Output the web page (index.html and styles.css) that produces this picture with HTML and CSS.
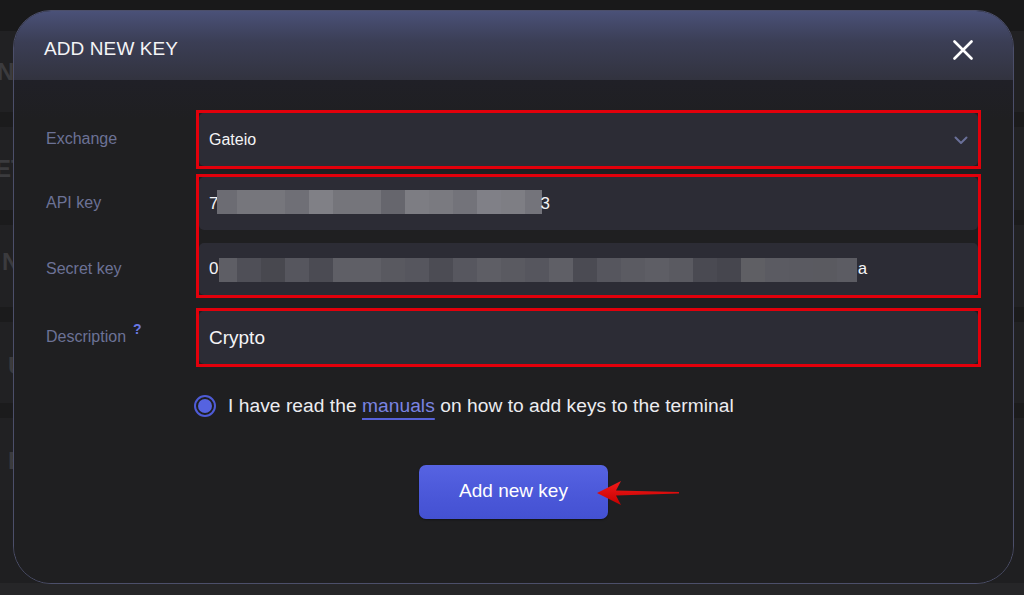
FILE: index.html
```html
<!DOCTYPE html>
<html lang="en">
<head>
<meta charset="utf-8">
<title>Add new key</title>
<link rel="stylesheet" href="styles.css">
</head>
<body>
<div class="backdrop">
  <div class="bd-top"></div>
  <div class="bd-row r1"><span class="bd-text t1">NC</span></div>
  <div class="bd-sep"></div>
  <div class="bd-row r2"><span class="bd-text t2">ET</span></div>
  <div class="bd-sep"></div>
  <div class="bd-row r3"><span class="bd-text t3">N</span></div>
  <div class="bd-sep"></div>
  <div class="bd-row r4"><span class="bd-text t4">U</span></div>
  <div class="bd-sep"></div>
  <div class="bd-row r5"><span class="bd-text t5">E</span></div>
  <div class="bd-row r6"></div>
  <div class="bd-bottom"></div>
</div>

<div class="modal">
  <div class="modal-header">
    <h1 class="modal-title">ADD NEW KEY</h1>
    <button class="close-btn" aria-label="Close">
      <svg width="20" height="20" viewBox="0 0 20 20"><path d="M1.5 1.5 L18.5 18.5 M18.5 1.5 L1.5 18.5" stroke="#ffffff" stroke-width="2.6" stroke-linecap="round" fill="none"/></svg>
    </button>
  </div>

  <div class="modal-body">
    <div class="group g1">
      <div class="labels"><div class="label h53">Exchange</div></div>
      <div class="mark">
        <div class="field h53 select">
          <span class="val-sm">Gateio</span>
          <svg class="chev" width="14" height="9" viewBox="0 0 14 9"><path d="M1.5 1.5 L7 7 L12.5 1.5" stroke="#6a7099" stroke-width="2" fill="none" stroke-linecap="round" stroke-linejoin="round"/></svg>
        </div>
      </div>
    </div>

    <div class="group g2">
      <div class="labels stack">
        <div class="label h53">API key</div>
        <div class="label h52">Secret key</div>
      </div>
      <div class="mark stack">
        <div class="field h53">
          <span class="val-md">7</span><span class="blur blur-api"></span><span class="val-md tail3">3</span>
        </div>
        <div class="field h52">
          <span class="val-md">0</span><span class="blur blur-secret"></span><span class="val-mono">a</span>
        </div>
      </div>
    </div>

    <div class="group g3">
      <div class="labels"><div class="label h53">Description<span class="qmark">?</span></div></div>
      <div class="mark">
        <div class="field h53"><span class="val-lg">Crypto</span></div>
      </div>
    </div>

    <div class="agree">
      <span class="radio"><span class="radio-dot"></span></span>
      <span class="agree-text">I have read the <a class="link">manuals</a> on how to add keys to the terminal</span>
    </div>

    <div class="actions">
      <button class="primary">Add new key
        <svg class="arrow" width="84" height="30" viewBox="0 0 84 30">
          <defs>
            <linearGradient id="ag" x1="0" y1="0" x2="0" y2="1">
              <stop offset="0" stop-color="#f21a1a"/>
              <stop offset="1" stop-color="#c40000"/>
            </linearGradient>
          </defs>
          <path d="M0 15 L24 3 L19 12.5 L82 14 L82 15.6 L19 17.5 L24 27 Z" fill="url(#ag)"/>
        </svg>
      </button>
    </div>
  </div>
</div>
</body>
</html>
```

FILE: styles.css
```css
* { box-sizing: border-box; }

html, body {
  margin: 0;
  padding: 0;
  background: #1d1d1f;
  font-family: "Liberation Sans", Arial, sans-serif;
  overflow: hidden;
}

body {
  width: 1024px;
  height: 595px;
  position: relative;
}

/* ---------- backdrop page ---------- */
.backdrop {
  display: flex;
  flex-direction: column;
  height: 595px;
}
.bd-top { height: 31px; background: #19191a; }
.bd-sep { height: 15px; background: #1b1b1c; }
.bd-row {
  background: #212123;
  display: flex;
  align-items: center;
  overflow: hidden;
}
.r1 { height: 81px; }
.r2 { height: 83px; }
.r3 { height: 82px; }
.r4 { height: 81px; }
.r5 { height: 82px; }
.r6 { height: 83px; background: #1f1f21; }
.bd-bottom { height: 12px; background: #262628; }

.bd-text {
  color: #3b3b3e;
  font-weight: bold;
  font-size: 24px;
  white-space: nowrap;
}
.t1 { margin-left: -3px; }
.t2 { margin-left: -5px; }
.t3 { margin-left: 2px; margin-top: -8px; }
.t4 { margin-left: 8px; margin-top: 6px; }
.t5 { margin-left: 8px; margin-top: 4px; }

/* ---------- modal ---------- */
.modal {
  position: absolute;
  left: 13px;
  top: 10px;
  width: 1001px;
  height: 574px;
  border: 1.5px solid #4c4f6a;
  border-radius: 38px;
  background: #1f1f21;
  overflow: hidden;
}

.modal-header {
  height: 69px;
  display: flex;
  align-items: center;
  justify-content: space-between;
  padding: 6px 40px 0 30px;
  background: linear-gradient(180deg, #4a5178 0%, #3b3e55 45%, #32333f 100%);
}

.modal-title {
  margin: 0;
  font-size: 19px;
  font-weight: normal;
  color: #f4f4f6;
  letter-spacing: 0.1px;
}

.close-btn {
  background: none;
  border: 0;
  padding: 0;
  width: 20px;
  height: 20px;
  display: flex;
  margin-top: 2px;
}

.modal-body {
  padding: 30px 32px 0 32px;
  background: linear-gradient(180deg, #202027 0px, #1f1f21 40px);
  height: 503px;
}

.group { display: flex; }
.g2 { margin-top: 5px; }
.g3 { margin-top: 10px; }

.labels {
  width: 150px;
  flex: none;
}
.labels.stack {
  display: flex;
  flex-direction: column;
  gap: 13px;
  padding-top: 3px;
}

.label {
  display: flex;
  align-items: center;
  font-size: 16px;
  color: #6c7296;
  padding-bottom: 1px;
}
.g1 .label, .g3 .label { margin-top: 3px; }

.qmark {
  color: #6a78e4;
  font-size: 14px;
  font-weight: bold;
  margin-left: 7px;
  align-self: flex-start;
  margin-top: 10px;
}

.h53 { height: 53px; }
.h52 { height: 52px; }

.mark {
  flex: 1;
  border: 3px solid #e2000b;
}
.mark.stack {
  display: flex;
  flex-direction: column;
  gap: 13px;
}

.field {
  background: #2c2c35;
  border-radius: 5px;
  display: flex;
  align-items: center;
  padding-left: 10px;
  color: #f4f4f6;
  white-space: nowrap;
}

.select { justify-content: space-between; padding-right: 10px; }
.chev { display: block; margin-top: 1px; }

.val-sm { font-size: 16px; }
.val-md { font-size: 17px; }
.val-lg { font-size: 19px; }
.val-mono {
  font-family: "Liberation Mono", "Courier New", monospace;
  font-size: 17px;
}
.tail3 { margin-left: -2px; }

.blur {
  display: inline-block;
  height: 24px;
  flex: none;
}
.blur-api {
  width: 325px;
  margin-left: -1px;
  margin-top: -3px;
  background: linear-gradient(90deg,
    #6c6c73 0 20px, #76767c 20px 44px, #76767c 44px 68px, #6f6f76 68px 92px,
    #808086 92px 116px, #75757b 116px 140px, #75757b 140px 164px, #66666d 164px 188px,
    #7d7d83 188px 212px, #7a7a80 212px 236px, #73737a 236px 260px, #808087 260px 284px,
    #7e7e84 284px 308px, #74747b 308px 325px);
}
.blur-secret {
  width: 638px;
  margin-left: 1px;
  margin-top: 2px;
  background: linear-gradient(90deg,
    #5e5e65 0 18px, #4f4f57 18px 42px, #48484f 42px 66px, #56565e 66px 90px,
    #4b4b53 90px 114px, #5f5f66 114px 138px, #5f5f66 138px 162px, #595960 162px 186px,
    #56565e 186px 210px, #4c4c54 210px 234px, #57575f 234px 258px, #5e5e65 258px 282px,
    #5a5a61 282px 306px, #56565e 306px 330px, #5f5f66 330px 354px, #4b4b53 354px 378px,
    #56565e 378px 402px, #5b5b62 402px 426px, #5e5e65 426px 450px, #5a5a61 450px 474px,
    #4a4a52 474px 498px, #46464e 498px 522px, #5f5f64 522px 546px, #5b5b62 546px 570px,
    #5a5a61 570px 594px, #5a5a60 594px 618px, #5c5c63 618px 638px);
}

/* ---------- agreement ---------- */
.agree {
  display: flex;
  align-items: center;
  margin-top: 28px;
  margin-left: 148px;
  height: 22px;
}
.radio {
  width: 22px;
  height: 22px;
  border-radius: 50%;
  border: 2px solid #4e5bd6;
  display: flex;
  align-items: center;
  justify-content: center;
  flex: none;
}
.radio-dot {
  width: 14px;
  height: 14px;
  border-radius: 50%;
  background: #5563e0;
}
.agree-text {
  margin-left: 12px;
  font-size: 19.2px;
  letter-spacing: 0.04px;
  color: #ececf0;
  white-space: nowrap;
}
.link {
  color: #7a84e2;
  text-decoration: underline;
  text-decoration-color: #5661d8;
  text-decoration-thickness: 2px;
  text-underline-offset: 6px;
}

/* ---------- actions ---------- */
.actions {
  display: flex;
  justify-content: center;
  margin-top: 48px;
}
.primary {
  position: relative;
  width: 189px;
  height: 54px;
  border: 0;
  border-radius: 7px;
  background: linear-gradient(180deg, #5663e2 0%, #4a57d8 60%, #4451d2 100%);
  color: #ffffff;
  font-family: "Liberation Sans", Arial, sans-serif;
  font-size: 19px;
  padding: 0 0 2px 0;
  box-shadow: 0 1px 2px rgba(0,0,0,0.4);
}
.arrow {
  position: absolute;
  left: 178px;
  top: 13px;
}
```
